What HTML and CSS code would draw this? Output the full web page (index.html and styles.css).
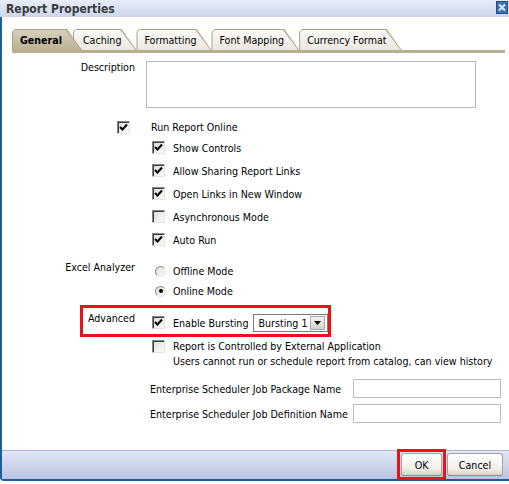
FILE: index.html
```html
<!DOCTYPE html>
<html lang="en">
<head>
<meta charset="UTF-8">
<title>Report Properties</title>
<link rel="stylesheet" href="styles.css">
</head>
<body>
<div class="window">

<div class="titlebar">
<span class="title">Report Properties</span>
<span class="close-btn">
<svg width="12" height="13" viewBox="0 0 12 13"><rect x="0.5" y="0.5" width="11" height="12" fill="#3d6fb6" stroke="#1f4f8f"/><path d="M3 3.5l6 6M9 3.5l-6 6" stroke="#dce8f7" stroke-width="2"/></svg>
</span>
</div>

<div class="frame">
<div class="main">

<!-- Tabs -->
<div class="tabs">
<div class="tab tab-active">General</div>
<div class="tab tab-after-active">Caching</div>
<div class="tab">Formatting</div>
<div class="tab">Font Mapping</div>
<div class="tab">Currency Format</div>
</div>
<div class="tab-strip"></div>

<!-- Form -->
<div class="field field-desc">
<div class="field-label">Description</div>
<div><textarea class="desc-box"></textarea></div>
</div>

<div class="field field-run">
<div class="field-label run-check"><span class="cb checked"><svg viewBox="0 0 11 11"><path d="M2 5l2.5 2.5L9 2.5"/></svg></span></div>
<div class="run-text">Run Report Online</div>
</div>

<div class="field">
<div></div>
<div class="sub-list">
<div class="check-row"><span class="cb checked"><svg viewBox="0 0 11 11"><path d="M2 5l2.5 2.5L9 2.5"/></svg></span>Show Controls</div>
<div class="check-row"><span class="cb checked"><svg viewBox="0 0 11 11"><path d="M2 5l2.5 2.5L9 2.5"/></svg></span>Allow Sharing Report Links</div>
<div class="check-row"><span class="cb checked"><svg viewBox="0 0 11 11"><path d="M2 5l2.5 2.5L9 2.5"/></svg></span>Open Links in New Window</div>
<div class="check-row"><span class="cb"></span>Asynchronous Mode</div>
<div class="check-row"><span class="cb checked"><svg viewBox="0 0 11 11"><path d="M2 5l2.5 2.5L9 2.5"/></svg></span>Auto Run</div>
</div>
</div>

<div class="field field-excel">
<div class="field-label">Excel Analyzer</div>
<div>
<div class="radio-row"><span class="radio"></span>Offline Mode</div>
<div class="radio-row"><span class="radio on"></span>Online Mode</div>
</div>
</div>

<div class="field field-adv">
<div class="field-label">Advanced</div>
<div class="adv-row">
<span class="cb checked"><svg viewBox="0 0 11 11"><path d="M2 5l2.5 2.5L9 2.5"/></svg></span>Enable Bursting
<span class="select">
<span class="select-text">Bursting 1</span>
<span class="select-btn"><svg width="7" height="4" viewBox="0 0 7 4"><path d="M0 0h7L3.5 4z" fill="#000"/></svg></span>
</span>
</div>
</div>

<div class="field field-ext">
<div></div>
<div class="ext-row">
<span class="cb"></span>
<div class="ext-text">Report is Controlled by External Application<br>Users cannot run or schedule report from catalog, can view history</div>
</div>
</div>

<div class="sched">
<span>Enterprise Scheduler Job Package Name</span><span class="text-input"></span>
<span>Enterprise Scheduler Job Definition Name</span><span class="text-input"></span>
</div>

</div>

<div class="footer">
<span class="ok-mark"><button class="btn btn-ok">OK</button></span>
<button class="btn btn-cancel">Cancel</button>
</div>
</div>

</div>
</body>
</html>
```

FILE: styles.css
```css
body {
margin: 0;
font-family: "DejaVu Sans Condensed", "Liberation Sans", sans-serif;
font-size: 10.6px;
color: #000;
background: #fff;
}

.window {
width: 509px;
height: 481px;
display: flex;
flex-direction: column;
box-shadow: 0 3px 0 #a2a2a2;
}

.titlebar {
height: 17px;
flex: none;
display: flex;
align-items: center;
justify-content: space-between;
padding: 0 1px 0 6px;
background: linear-gradient(#e7ecf7, #cdd5eb);
}

.title {
font-weight: bold;
font-size: 12px;
color: #3a3a3a;
}

.close-btn {
display: flex;
margin-top: -2px;
}

.frame {
flex: 1;
display: flex;
flex-direction: column;
border-left: 2px solid #1e5c9c;
border-bottom: 2px solid #1e5c9c;
border-bottom-left-radius: 4px;
}

.main {
flex: 1;
}

/* Tabs */
.tabs {
display: flex;
margin: 12px 0 0 10px;
height: 21px;
}

.tab {
position: relative;
display: flex;
align-items: center;
padding: 0 15px 0 8px;
background: #aaa189;
white-space: nowrap;
clip-path: polygon(0 3px, 3px 0, calc(100% - 15px) 0, 100% 100%, 0 100%);
}

.tab::before {
content: "";
position: absolute;
top: 1px;
left: 1px;
right: 1px;
bottom: 0;
z-index: -1;
background: linear-gradient(#fbfaf7, #ece8df);
clip-path: polygon(0 2px, 2px 0, calc(100% - 15px) 0, 100% 100%, 0 100%);
}

.tab-active {
z-index: 2;
font-weight: bold;
padding: 0 20px 0 8px;
}

.tab-active::before {
background: linear-gradient(#d6cfba, #bcb195);
bottom: 0;
}

.tab-after-active {
margin-left: -9px;
padding-left: 10px;
}

.tab-strip {
height: 3px;
margin: 0 4px 0 10px;
background: #b9ae92;
}

/* Form rows */
.field {
display: grid;
grid-template-columns: 133px 1fr;
column-gap: 11px;
}

.field-label {
text-align: right;
line-height: 13px;
white-space: nowrap;
}

.field-desc {
margin-top: 8px;
}

.desc-box {
display: block;
width: 330px;
height: 47px;
box-sizing: border-box;
margin: 0;
border: 1px solid #b9b9b9;
resize: none;
}

.field-run {
margin-top: 9px;
height: 20px;
align-items: center;
}

.run-check {
display: flex;
justify-content: flex-end;
margin-right: -3px;
}

.run-text {
padding-left: 5px;
}

.sub-list {
padding-left: 6px;
margin-top: -1px;
}

.check-row {
height: 23px;
display: flex;
align-items: center;
}

/* Checkbox */
.cb {
flex: none;
width: 13px;
height: 13px;
box-sizing: border-box;
margin-right: 8px;
border: 1px solid;
border-color: #858585 #e4e4e4 #e4e4e4 #858585;
box-shadow: inset 1px 1px 0 #3c3c3c;
background: linear-gradient(135deg, #dcdcd6, #fbfbfa);
display: flex;
}

.cb svg {
width: 11px;
height: 11px;
fill: none;
stroke: #000;
stroke-width: 2;
}

/* Radios */
.field-excel {
margin-top: 10px;
}

.radio-row {
height: 20px;
display: flex;
align-items: center;
padding-left: 9px;
}

.radio {
width: 11px;
height: 11px;
box-sizing: border-box;
margin-right: 7px;
border-radius: 50%;
border: 1px solid;
border-color: #8a8a8a #e8e8e8 #e8e8e8 #8a8a8a;
background: linear-gradient(135deg, #dcdcd6, #fff);
display: flex;
align-items: center;
justify-content: center;
}

.radio.on::after {
content: "";
width: 4px;
height: 4px;
border-radius: 50%;
background: #000;
}

/* Advanced */
.field-adv {
position: relative;
margin-top: 11px;
height: 20px;
}

.field-adv::after {
content: "";
position: absolute;
top: -7px;
left: 78px;
width: 251px;
height: 32px;
box-sizing: border-box;
border: 3px solid #e8131a;
}

.adv-row {
display: flex;
align-items: center;
padding-left: 6px;
margin-top: 1px;
}

.select {
display: flex;
align-items: center;
justify-content: space-between;
width: 75px;
height: 18px;
box-sizing: border-box;
margin-left: 5px;
border: 1px solid #7b7b7b;
background: #fff;
}

.select-text {
padding-left: 4px;
white-space: nowrap;
}

.select-btn {
width: 13px;
height: 12px;
margin-right: 2px;
border: 1px solid #a8a8a8;
background: linear-gradient(#f4f4f2, #d4d2ca);
display: flex;
align-items: center;
justify-content: center;
}

/* External app */
.field-ext {
margin-top: 7px;
}

.ext-row {
display: flex;
align-items: flex-start;
padding-left: 6px;
}

.ext-row .cb {
margin-top: 1px;
}

.ext-text {
line-height: 15px;
white-space: nowrap;
}

/* Scheduler */
.sched {
display: grid;
grid-template-columns: 203px 148px;
row-gap: 6px;
align-items: center;
margin: 10px 0 0 148px;
white-space: nowrap;
}

.text-input {
height: 19px;
box-sizing: border-box;
border: 1px solid #bcbcbc;
}

/* Footer */
.footer {
height: 26px;
flex: none;
display: flex;
justify-content: flex-end;
align-items: flex-start;
gap: 1px;
padding: 2px 6px 0 0;
border-top: 1px solid #a9b4d3;
background: linear-gradient(#e2e8f8, #b9c3e1);
}

.ok-mark {
display: flex;
margin-top: -4px;
padding: 1px;
border: 3px solid #e8131a;
}

.btn {
height: 23px;
padding: 0;
font: inherit;
color: #000;
border: 1px solid #a3a3a3;
border-bottom-color: #8c8c8c;
border-radius: 3px;
background: linear-gradient(#ffffff, #f0efea 70%, #d8d5c8);
}

.btn-ok {
width: 41px;
}

.btn-cancel {
width: 56px;
}
```
